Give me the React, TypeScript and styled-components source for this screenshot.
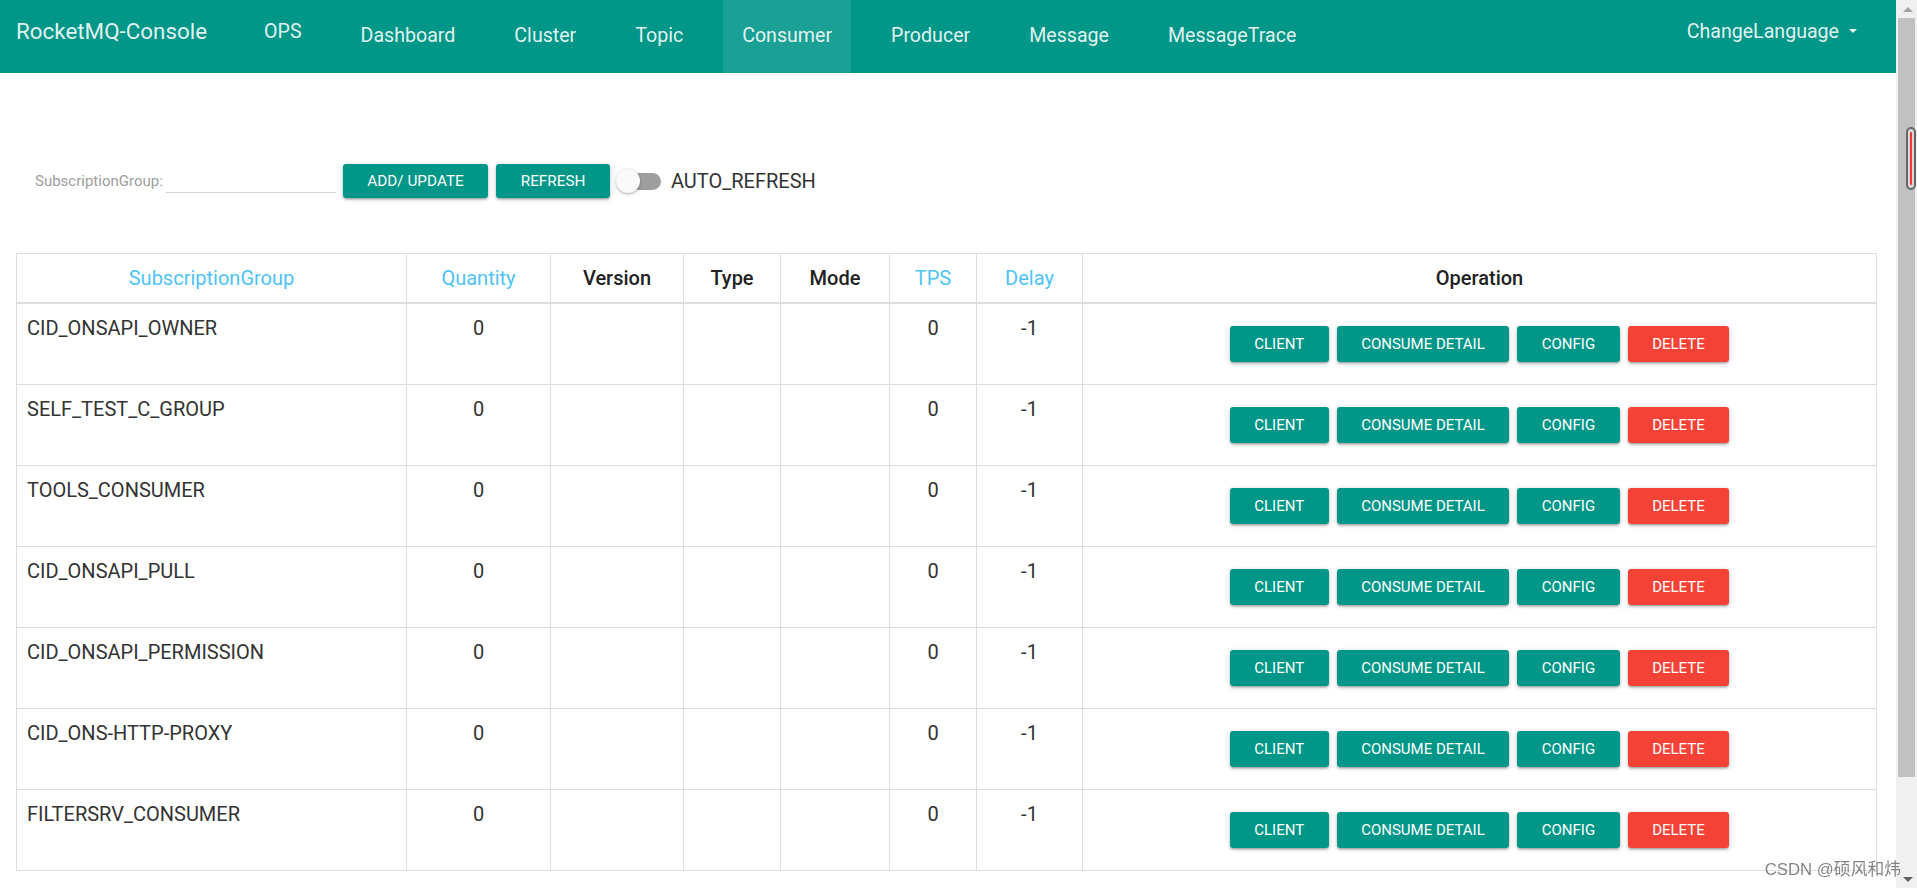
import styled, { createGlobalStyle } from "styled-components";

const GlobalStyle = createGlobalStyle`
  html, body {
    margin: 0;
    padding: 0;
    height: 100%;
    overflow: hidden;
    background: #fff;
  }
  body {
    font-family: Roboto, "Liberation Sans", Arial, sans-serif;
    color: #333;
  }
  * { box-sizing: border-box; }
`;

const TEAL = "#009688";
const RED = "#f44336";
const SORT_BLUE = "#4fc3f7";

const Shell = styled.div`
  display: flex;
  height: 100vh;
  overflow: hidden;
`;

const Page = styled.div`
  flex: 1;
  min-width: 0;
  overflow: hidden;
`;

/* ---------- navbar ---------- */

const NavBar = styled.nav`
  display: flex;
  align-items: stretch;
  height: 73px;
  padding-left: 16px;
  background: ${TEAL};
  color: rgba(255, 255, 255, 0.9);
`;

const Brand = styled.a`
  display: flex;
  align-items: center;
  padding-bottom: 12px;
  margin-right: 38px;
  font-size: 22.4px;
  white-space: nowrap;
  cursor: pointer;
`;

const NavItem = styled.a<{ $active?: boolean; $lift?: boolean }>`
  display: flex;
  align-items: center;
  padding: 0 19px ${(p) => (p.$lift ? "11px" : "3px")};
  margin-right: 21px;
  font-size: 19.6px;
  white-space: nowrap;
  cursor: pointer;
  background: ${(p) => (p.$active ? "rgba(255, 255, 255, 0.1)" : "transparent")};
`;

const NavSpacer = styled.div`
  flex: 1;
`;

const LangMenu = styled(NavItem)`
  gap: 10px;
  margin-right: 20px;
`;

const Caret = styled.span`
  width: 0;
  height: 0;
  border-left: 4px solid transparent;
  border-right: 4px solid transparent;
  border-top: 4px solid rgba(255, 255, 255, 0.9);
`;

/* ---------- toolbar ---------- */

const Toolbar = styled.div`
  display: flex;
  align-items: center;
  height: 34px;
  margin-top: 91px;
  padding-left: 35px;
`;

const FieldLabel = styled.label`
  font-size: 15px;
  color: #9e9e9e;
`;

const LineInput = styled.input`
  width: 170px;
  height: 30px;
  margin: 0 7px 0 3px;
  padding: 0;
  border: none;
  border-bottom: 1px solid #d4d4d4;
  outline: none;
  background: transparent;
  font: inherit;
  transform: translateY(-3px);
`;

const Button = styled.button<{ $danger?: boolean; $tall?: boolean }>`
  height: ${(p) => (p.$tall ? "36px" : "34px")};
  padding: 0 24.5px;
  border: none;
  border-radius: 3px;
  background: ${(p) => (p.$danger ? RED : TEAL)};
  color: #fff;
  font-family: Roboto, "Liberation Sans", Arial, sans-serif;
  font-size: ${(p) => (p.$tall ? "15px" : "15.3px")};
  text-transform: uppercase;
  white-space: nowrap;
  cursor: pointer;
  box-shadow: 0 2px 2px 0 rgba(0, 0, 0, 0.14), 0 3px 1px -2px rgba(0, 0, 0, 0.12),
    0 1px 5px 0 rgba(0, 0, 0, 0.2);
`;

const ToolButtons = styled.div`
  display: flex;
  gap: 8px;
`;

const Switch = styled.div`
  display: flex;
  align-items: center;
  margin-left: 6px;
`;

const Knob = styled.span`
  width: 24px;
  height: 24px;
  border-radius: 50%;
  background: #fafafa;
  box-shadow: 0 1px 3px rgba(0, 0, 0, 0.35);
  position: relative;
  z-index: 1;
`;

const Track = styled.span`
  width: 43px;
  height: 17px;
  margin-left: -22px;
  border-radius: 9px;
  background: #9e9e9e;
`;

const SwitchText = styled.span`
  margin-left: 10px;
  font-size: 20px;
  color: #333;
`;

/* ---------- table ---------- */

const Table = styled.table`
  width: 1860px;
  margin: 55px 20px 0 16px;
  border-collapse: collapse;
  table-layout: fixed;
  border: 1px solid #ddd;
  font-size: 20px;
`;

const Th = styled.th<{ $sortable?: boolean }>`
  padding: 10px 8px;
  line-height: 28px;
  border: 1px solid #ddd;
  border-bottom: 2px solid #ddd;
  text-align: center;
  font-weight: ${(p) => (p.$sortable ? 400 : 500)};
  color: ${(p) => (p.$sortable ? SORT_BLUE : "#222")};
  cursor: ${(p) => (p.$sortable ? "pointer" : "default")};
`;

const Td = styled.td<{ $center?: boolean }>`
  height: 81px;
  padding: 10px;
  line-height: 28.6px;
  vertical-align: top;
  border: 1px solid #ddd;
  text-align: ${(p) => (p.$center ? "center" : "left")};
  color: #333;
`;

const OpGroup = styled.div`
  display: flex;
  justify-content: center;
  gap: 8px;
  margin: 12px 0;
`;

/* ---------- scrollbar look-alike on the right edge ---------- */

const Rail = styled.div`
  display: flex;
  flex-direction: column;
  width: 21px;
  flex-shrink: 0;
  background: #f0f0f0;
`;

const ArrowCell = styled.div<{ $down?: boolean }>`
  display: flex;
  align-items: center;
  justify-content: center;
  height: 18px;
  margin-top: ${(p) => (p.$down ? "auto" : "0")};
  &::after {
    content: "";
    border-left: 5px solid transparent;
    border-right: 5px solid transparent;
    ${(p) =>
      p.$down ? "border-top: 5px solid #606060;" : "border-bottom: 5px solid #a3a3a3;"}
    transform: translateX(1px);
  }
`;

const Thumb = styled.div`
  height: 759px;
  margin: 0 2px;
  background: #c1c1c1;
  padding-top: 109px;
`;

const Marker = styled.div`
  display: flex;
  width: 10px;
  height: 63px;
  margin-left: 8px;
  padding: 3px 2px;
  border: 2px solid #666;
  border-radius: 5px;
  background: #d8d8d8;
`;

const MarkerFill = styled.div`
  flex: 1;
  border-radius: 2px;
  background: #f33;
`;

const Watermark = styled.div`
  position: fixed;
  right: 16px;
  bottom: 8px;
  font-family: "Liberation Sans", "Noto Sans CJK SC", sans-serif;
  font-size: 16.8px;
  color: rgba(90, 90, 90, 0.75);
  text-shadow: 0 0 2px #fff;
  pointer-events: none;
`;

const navLinks = ["Dashboard", "Cluster", "Topic", "Consumer", "Producer", "Message", "MessageTrace"];

const columns: { label: string; width: number; sortable?: boolean }[] = [
  { label: "SubscriptionGroup", width: 390, sortable: true },
  { label: "Quantity", width: 144, sortable: true },
  { label: "Version", width: 133 },
  { label: "Type", width: 97 },
  { label: "Mode", width: 109 },
  { label: "TPS", width: 87, sortable: true },
  { label: "Delay", width: 106, sortable: true },
  { label: "Operation", width: 794 },
];

const groups = [
  "CID_ONSAPI_OWNER",
  "SELF_TEST_C_GROUP",
  "TOOLS_CONSUMER",
  "CID_ONSAPI_PULL",
  "CID_ONSAPI_PERMISSION",
  "CID_ONS-HTTP-PROXY",
  "FILTERSRV_CONSUMER",
];

export default function App() {
  return (
    <>
      <GlobalStyle />
      <Shell>
        <Page>
          <NavBar>
            <Brand>RocketMQ-Console</Brand>
            <NavItem $lift>OPS</NavItem>
            {navLinks.map((l) => (
              <NavItem key={l} $active={l === "Consumer"}>
                {l}
              </NavItem>
            ))}
            <NavSpacer />
            <LangMenu $lift>
              ChangeLanguage
              <Caret />
            </LangMenu>
          </NavBar>

          <Toolbar>
            <FieldLabel>SubscriptionGroup:</FieldLabel>
            <LineInput />
            <ToolButtons>
              <Button>ADD/ UPDATE</Button>
              <Button>REFRESH</Button>
            </ToolButtons>
            <Switch>
              <Knob />
              <Track />
            </Switch>
            <SwitchText>AUTO_REFRESH</SwitchText>
          </Toolbar>

          <Table>
            <colgroup>
              {columns.map((c) => (
                <col key={c.label} style={{ width: c.width }} />
              ))}
            </colgroup>
            <thead>
              <tr>
                {columns.map((c) => (
                  <Th key={c.label} $sortable={c.sortable}>
                    {c.label}
                  </Th>
                ))}
              </tr>
            </thead>
            <tbody>
              {groups.map((g) => (
                <tr key={g}>
                  <Td>{g}</Td>
                  <Td $center>0</Td>
                  <Td />
                  <Td />
                  <Td />
                  <Td $center>0</Td>
                  <Td $center>-1</Td>
                  <Td $center>
                    <OpGroup>
                      <Button $tall>CLIENT</Button>
                      <Button $tall>CONSUME DETAIL</Button>
                      <Button $tall>CONFIG</Button>
                      <Button $tall $danger>
                        DELETE
                      </Button>
                    </OpGroup>
                  </Td>
                </tr>
              ))}
            </tbody>
          </Table>
        </Page>

        <Rail>
          <ArrowCell />
          <Thumb>
            <Marker>
              <MarkerFill />
            </Marker>
          </Thumb>
          <ArrowCell $down />
        </Rail>
      </Shell>
      <Watermark>CSDN @硕风和炜</Watermark>
    </>
  );
}
